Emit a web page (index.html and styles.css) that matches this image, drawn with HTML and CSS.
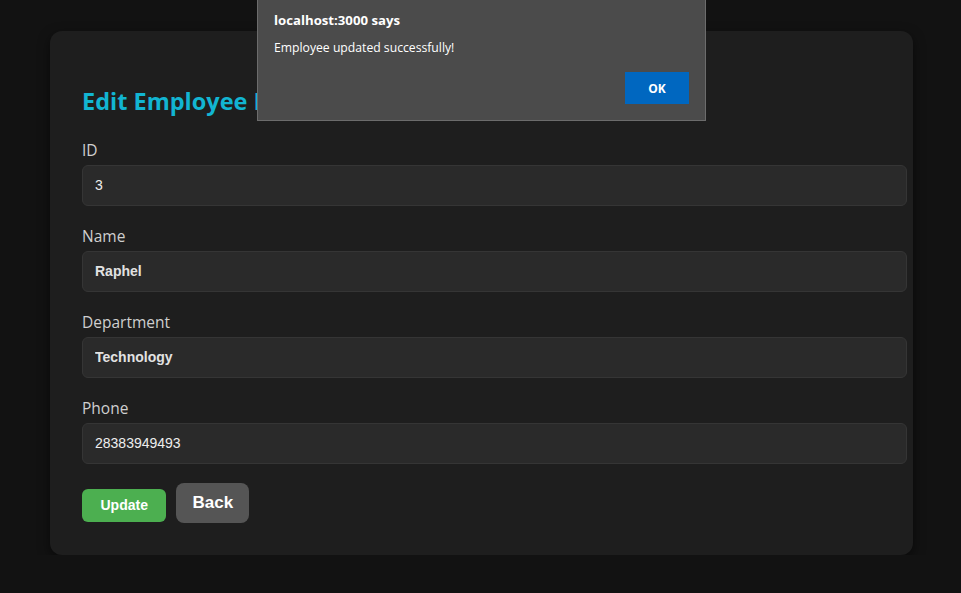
FILE: index.html
```html
<!DOCTYPE html>
<html lang="en">
<head>
<meta charset="utf-8">
<title>Edit Employee</title>
<link rel="stylesheet" href="styles.css">
</head>
<body>
<main class="card">
  <h2 class="title">Edit Employee Details</h2>
  <form class="form">
    <div class="group">
      <label class="label">ID</label>
      <input class="input" type="text" value="3">
    </div>
    <div class="group">
      <label class="label">Name</label>
      <input class="input input-strong" type="text" value="Raphel">
    </div>
    <div class="group">
      <label class="label">Department</label>
      <input class="input input-strong" type="text" value="Technology">
    </div>
    <div class="group">
      <label class="label">Phone</label>
      <input class="input" type="text" value="28383949493">
    </div>
    <div class="actions">
      <button class="btn btn-update" type="button">Update</button>
      <button class="btn btn-back" type="button">Back</button>
    </div>
  </form>
</main>
<div class="dialog">
  <div class="dialog-title">localhost:3000 says</div>
  <div class="dialog-msg">Employee updated successfully!</div>
  <div class="dialog-actions">
    <button class="dialog-ok" type="button">OK</button>
  </div>
</div>
</body>
</html>
```
FILE: styles.css
```css
html, body {
  margin: 0;
  padding: 0;
}
body {
  background: #121212;
  font-family: "Open Sans", "Noto Sans", sans-serif;
  color: #e0e0e0;
  padding: 31px 48px 0 50px;
}
.card {
  background: #1e1e1e;
  border-radius: 12px;
  padding: 54px 32px 31px 32px;
  box-shadow: 0 4px 12px rgba(0,0,0,0.5);
}
.title {
  margin: 0 0 22px 0;
  color: #12b5d2;
  font-size: 23.5px;
  font-weight: 700;
  line-height: 32px;
}
.form {
  display: block;
}
.group {
  margin-bottom: 19px;
}
.label {
  display: block;
  color: #cfcfcf;
  font-size: 15.5px;
  line-height: 22px;
  margin-bottom: 4px;
}
.input {
  display: block;
  width: 100%;
  box-sizing: content-box;
  margin: 0;
  padding: 12px;
  line-height: 15px;
  font-size: 14px;
  font-family: "Liberation Sans", Arial, sans-serif;
  color: #eeeeee;
  background: #2a2a2a;
  border: 1px solid #353535;
  border-radius: 6px;
  outline: none;
}
.input-strong {
  font-weight: 700;
  color: #e2e2e2;
}
.actions {
  display: flex;
  align-items: flex-end;
  gap: 10px;
  padding-bottom: 1px;
}
.btn {
  border: none;
  color: #fff;
  font-family: "Liberation Sans", Arial, sans-serif;
  font-weight: 700;
  cursor: pointer;
}
.btn-update {
  background: #4caf50;
  font-size: 14px;
  line-height: 17px;
  padding: 8px 18.5px;
  border-radius: 6px;
  margin-bottom: 1px;
}
.btn-back {
  background: #555555;
  font-size: 17px;
  line-height: 20px;
  padding: 10px 16px;
  border-radius: 8px;
}
.dialog {
  position: absolute;
  left: 257px;
  top: 0;
  width: 447px;
  height: 120px;
  background: #4b4b4b;
  border: 1px solid #6c6c6c;
  border-top: none;
  box-sizing: content-box;
  font-family: "Open Sans", "Noto Sans", sans-serif;
  color: #ffffff;
}
.dialog-title {
  font-size: 13.2px;
  font-weight: 700;
  line-height: 18px;
  padding: 11px 0 0 16px;
}
.dialog-msg {
  font-size: 12.2px;
  line-height: 18px;
  padding: 10px 0 0 16px;
}
.dialog-actions {
  display: flex;
  justify-content: flex-end;
  padding: 15px 16px 0 0;
}
.dialog-ok {
  width: 64px;
  height: 32px;
  border: none;
  background: #0067c0;
  color: #fff;
  font-family: "Open Sans", "Noto Sans", sans-serif;
  font-weight: 700;
  font-size: 12px;
}
```
